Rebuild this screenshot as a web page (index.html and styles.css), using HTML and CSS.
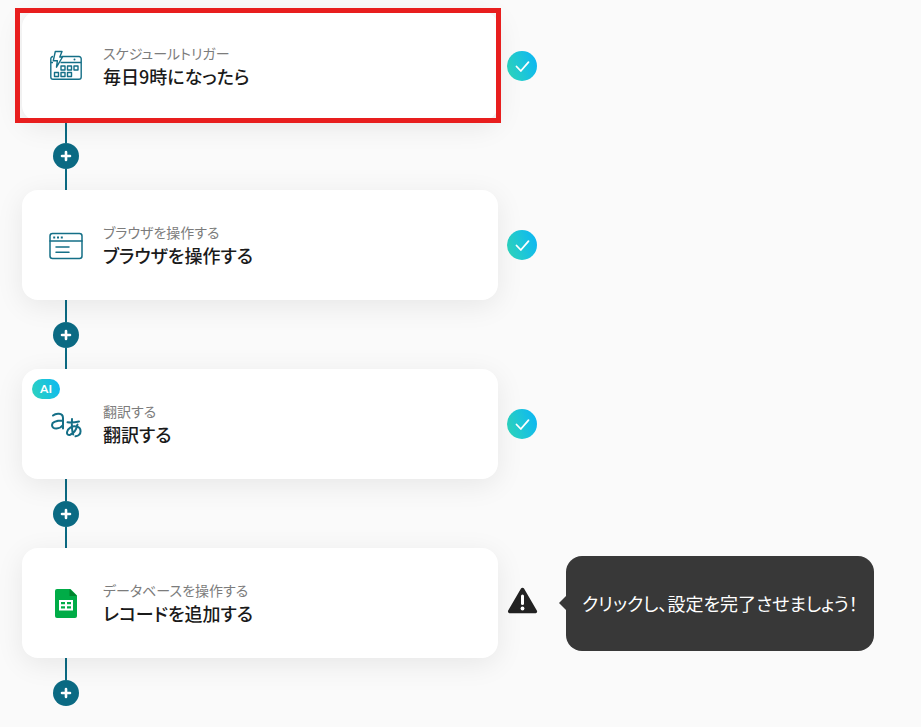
FILE: index.html
```html
<!DOCTYPE html>
<html lang="ja">
<head>
<meta charset="utf-8">
<meta name="viewport" content="width=device-width, initial-scale=1">
<title>ワークフロー</title>
<link rel="stylesheet" href="styles.css">
</head>
<body>
<svg class="defs" width="0" height="0" aria-hidden="true">
  <defs>
    <symbol id="check" viewBox="0 0 30 30">
      <path d="M9.5 15.5 13.8 20 21.5 11.2" fill="none" stroke="#fff" stroke-width="1.8" stroke-linecap="round" stroke-linejoin="round"/>
    </symbol>
    <symbol id="plus" viewBox="0 0 26 26">
      <path d="M13 9v8M9 13h8" fill="none" stroke="#fff" stroke-width="2.6" stroke-linecap="round"/>
    </symbol>
  </defs>
</svg>
<main class="flow">
  <section class="step">
    <article class="card card-selected">
      <svg class="icon" viewBox="0 0 34 34" aria-hidden="true">
        <g fill="none" stroke="#146f87" stroke-width="1.4" stroke-linejoin="round">
          <path d="M12.5 7.500H30a2.2 2.2 0 0 1 2.2 2.2V28a2.2 2.2 0 0 1-2.2 2.2H4A2.2 2.2 0 0 1 1.8 28V9.700A2.200 2.200 0 0 1 4 7.500"/>
          <path d="M1.8 13.500H4M11.5 13.500H32.200"/>
          <path d="M6.3 2.500H13l-2.200 5.500h2.700L7.500 18.200 8.400 11.700H4.300z"/>
          <path d="M12 17h4v4h-4zM18.500 17h4v4h-4zM25 17h4v4h-4zM5.500 23.500h4v4h-4zM12 23.500h4v4h-4zM18.500 23.500h4v4h-4z"/>
        </g>
        <circle cx="25.500" cy="10.500" r="1" fill="#146f87"/>
      </svg>
      <div class="text">
        <p class="kind">スケジュールトリガー</p>
        <h2 class="name">毎日9時になったら</h2>
      </div>
    </article>
    <span class="status done" role="img" aria-label="完了"><svg width="30" height="30"><use href="#check"/></svg></span>
  </section>
  <div class="connector"><button class="add" type="button" aria-label="追加"><svg width="26" height="26"><use href="#plus"/></svg></button></div>

  <section class="step">
    <article class="card">
      <svg class="icon" viewBox="0 0 34 34" aria-hidden="true">
        <g fill="none" stroke="#146f87" stroke-width="1.5" stroke-linecap="round">
          <rect x="1" y="5.500" width="32" height="25" rx="2.500"/>
          <path d="M1 13h32M7 19h13M7 24.300h13"/>
        </g>
        <path d="M4.200 9.400h2M8 9.400h2M11.800 9.400h2" stroke="#146f87" stroke-width="2"/>
      </svg>
      <div class="text">
        <p class="kind">ブラウザを操作する</p>
        <h2 class="name">ブラウザを操作する</h2>
      </div>
    </article>
    <span class="status done" role="img" aria-label="完了"><svg width="30" height="30"><use href="#check"/></svg></span>
  </section>
  <div class="connector"><button class="add" type="button" aria-label="追加"><svg width="26" height="26"><use href="#plus"/></svg></button></div>

  <section class="step">
    <article class="card">
      <span class="badge">AI</span>
      <svg class="icon" viewBox="0 0 34 34" aria-hidden="true">
        <g fill="none" stroke="#146f87" stroke-width="2" stroke-linecap="round" stroke-linejoin="round">
          <path d="M4 8.500C6.500 6.300 14 5.300 14 11V21.500M14 13.500C8 13.500 3 14 3 18c0 5 8 4.300 11 0"/>
          <path d="M18.500 15.300c4 .4 8 0 11.500-.8M23 12c-.4 6-.4 11 1.200 15.500M28.500 17.500c-1 4.500-4 9-7.300 10.300-2 .7-3.500-.5-3.200-2.700.6-4 5.200-6.100 8.800-5.700 6.400.6 6.400 8.800-.3 9.900"/>
        </g>
      </svg>
      <div class="text">
        <p class="kind">翻訳する</p>
        <h2 class="name">翻訳する</h2>
      </div>
    </article>
    <span class="status done" role="img" aria-label="完了"><svg width="30" height="30"><use href="#check"/></svg></span>
  </section>
  <div class="connector"><button class="add" type="button" aria-label="追加"><svg width="26" height="26"><use href="#plus"/></svg></button></div>

  <section class="step">
    <article class="card">
      <svg class="icon" viewBox="0 0 34 34" aria-hidden="true">
        <path d="M8 3h13.500L28 9.500v20.500a2 2 0 0 1-2 2H8a2 2 0 0 1-2-2V5a2 2 0 0 1 2-2z" fill="#00ac47"/>
        <path d="M20.500 3v7H28z" fill="#00832d"/>
        <path d="M10 14h14v10.500H10zM12 16v2.300h4V16zM18 16v2.300h4V16zM12 20.200v2.300h4v-2.300zM18 20.200v2.300h4v-2.300z" fill="#fff" fill-rule="evenodd"/>
      </svg>
      <div class="text">
        <p class="kind">データベースを操作する</p>
        <h2 class="name">レコードを追加する</h2>
      </div>
    </article>
    <span class="status" role="img" aria-label="警告">
      <svg width="30" height="30" viewBox="0 0 30 30">
        <path d="M15.500 1.500 28.300 23.500H2.700z" fill="#222" stroke="#222" stroke-width="3.500" stroke-linejoin="round"/>
        <path d="M15.500 8v7.500" stroke="#fff" stroke-width="3" stroke-linecap="round"/>
        <circle cx="15.500" cy="20.500" r="1.900" fill="#fff"/>
      </svg>
    </span>
    <p class="tip" role="status">クリックし、設定を完了させましょう！</p>
  </section>
  <div class="connector"><button class="add" type="button" aria-label="追加"><svg width="26" height="26"><use href="#plus"/></svg></button></div>
</main>
</body>
</html>
```
FILE: styles.css
```css
* {
  box-sizing: border-box;
}

body {
  margin: 0;
  background: #fafafa;
  color: #222;
  font-family: "Noto Sans CJK JP", "Noto Sans", sans-serif;
  font-feature-settings: "palt";
}

svg {
  display: block;
  overflow: visible;
}

.defs {
  position: absolute;
}

.flow {
  padding: 11px 22px 0;
}

.step {
  display: flex;
  align-items: center;
}

.card {
  position: relative;
  display: flex;
  align-items: center;
  gap: 20px;
  flex: 0 1 476px;
  min-height: 110px;
  padding: 24px 27px;
  border-radius: 16px;
  background: #fff;
  box-shadow: 0 6px 28px rgba(0, 0, 0, 0.08);
}

.card-selected::after {
  content: "";
  position: absolute;
  inset: -3px -3px -2px -7px;
  border: 5px solid #e81e1e;
}

.icon {
  flex: none;
  width: 34px;
  height: 34px;
}

.kind,
.name {
  margin: 0;
}

.kind {
  color: #7c7c7c;
  font-size: 14px;
  line-height: 20px;
}

.name {
  color: #1a1a1a;
  font-size: 18px;
  font-weight: 500;
  line-height: 26px;
}

.badge {
  position: absolute;
  top: 10px;
  left: 10px;
  width: 28px;
  border-radius: 10px;
  background: linear-gradient(70deg, #2ed3bd, #0db8f3);
  color: #fff;
  font-family: Lato, sans-serif;
  font-size: 12px;
  font-weight: 700;
  line-height: 20px;
  text-align: center;
}

.status {
  flex: none;
  width: 30px;
  height: 30px;
  margin-left: 9px;
  border-radius: 50%;
}

.done {
  background: linear-gradient(70deg, #30d8b8, #0ab4f7);
}

.connector {
  display: flex;
  flex-direction: column;
  align-items: center;
  width: 26px;
  height: 69px;
  margin-left: 31px;
}

.connector::before,
.connector::after {
  content: "";
  flex: 1;
  width: 2px;
  background: #0b6a83;
}

.connector:last-child::after {
  visibility: hidden;
}

.add {
  flex: none;
  width: 26px;
  height: 26px;
  padding: 0;
  border: 0;
  border-radius: 50%;
  background: #0b6a83;
}

.tip {
  position: relative;
  margin: 0 0 0 29px;
  padding: 34px 16px;
  border-radius: 16px;
  background: #383838;
  color: #fff;
  font-size: 18px;
  line-height: 27px;
}

.tip::before {
  content: "";
  position: absolute;
  top: 50%;
  left: -7px;
  border: 7px solid transparent;
  border-left-width: 0;
  border-right-color: #383838;
  transform: translateY(-50%);
}
```
